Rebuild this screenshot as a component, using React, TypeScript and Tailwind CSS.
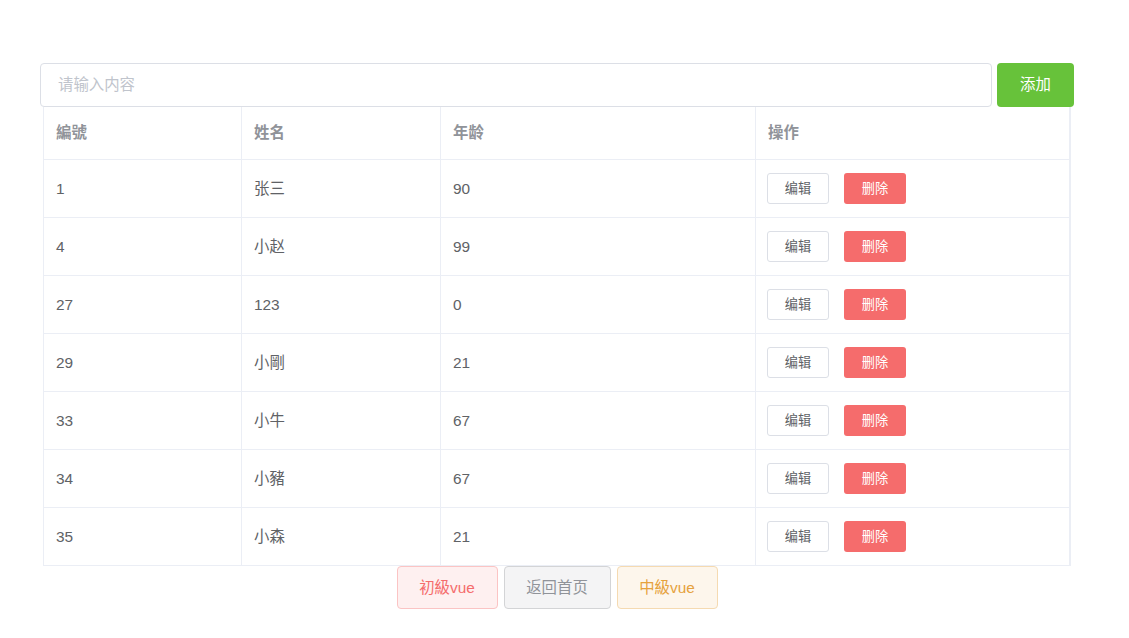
const rows = [
  { id: 1, name: "张三", age: 90 },
  { id: 4, name: "小赵", age: 99 },
  { id: 27, name: "123", age: 0 },
  { id: 29, name: "小剛", age: 21 },
  { id: 33, name: "小牛", age: 67 },
  { id: 34, name: "小豬", age: 67 },
  { id: 35, name: "小森", age: 21 },
];

const cols = "grid grid-cols-[198px_199px_315px_314px]";

export default function App() {
  return (
    <main className="min-h-screen bg-white pt-[63px] text-[15.4px] text-[#606266] [font-family:'Liberation_Sans','Noto_Sans_CJK_SC',sans-serif]">
      <div className="ml-[40px] w-[1034px]">
        {/* 输入框 + 添加 */}
        <div className="flex gap-[5px]">
          <input
            placeholder="请输入内容"
            className="h-[44px] w-[952px] rounded-[4px] border border-[#dcdfe6] px-[17px] text-[15.4px] text-[#606266] outline-none placeholder:text-[#c0c4cc]"
          />
          <button className="h-[44px] w-[77px] rounded-[4px] bg-[#67c23a] text-[15.4px] text-white">添加</button>
        </div>

        {/* 表格 */}
        <div className="ml-[3px] w-[1028px] border-x border-[#ebeef5]">
          <div className={`${cols} h-[53px] border-b border-[#ebeef5] font-bold text-[#909399]`}>
            {["編號", "姓名", "年龄", "操作"].map((h) => (
              <div key={h} className="flex items-center border-r border-[#ebeef5] px-[12px]">
                {h}
              </div>
            ))}
          </div>
          {rows.map((r) => (
            <div key={r.id} className={`${cols} h-[58px] border-b border-[#ebeef5]`}>
              <div className="flex items-center border-r border-[#ebeef5] px-[12px]">{r.id}</div>
              <div className="flex items-center border-r border-[#ebeef5] px-[12px]">{r.name}</div>
              <div className="flex items-center border-r border-[#ebeef5] px-[12px]">{r.age}</div>
              <div className="flex items-center gap-[15px] border-r border-[#ebeef5] px-[11px]">
                <button className="h-[31px] w-[62px] rounded-[3px] border border-[#dcdfe6] bg-white text-[13.2px] text-[#606266]">编辑</button>
                <button className="h-[31px] w-[62px] rounded-[3px] bg-[#f56c6c] text-[13.2px] text-white">删除</button>
              </div>
            </div>
          ))}
        </div>

        {/* 底部导航 */}
        <div className="ml-[3px] flex w-[1028px] justify-center gap-[6px]">
          <button className="h-[43px] w-[101px] rounded-[4px] border border-[#fbc4c4] bg-[#fef0f0] text-[#f56c6c]">初級vue</button>
          <button className="h-[43px] w-[107px] rounded-[4px] border border-[#d3d4d6] bg-[#f4f4f5] text-[#909399]">返回首页</button>
          <button className="h-[43px] w-[101px] rounded-[4px] border border-[#f5dab1] bg-[#fdf6ec] text-[#e6a23c]">中級vue</button>
        </div>
      </div>
    </main>
  );
}
